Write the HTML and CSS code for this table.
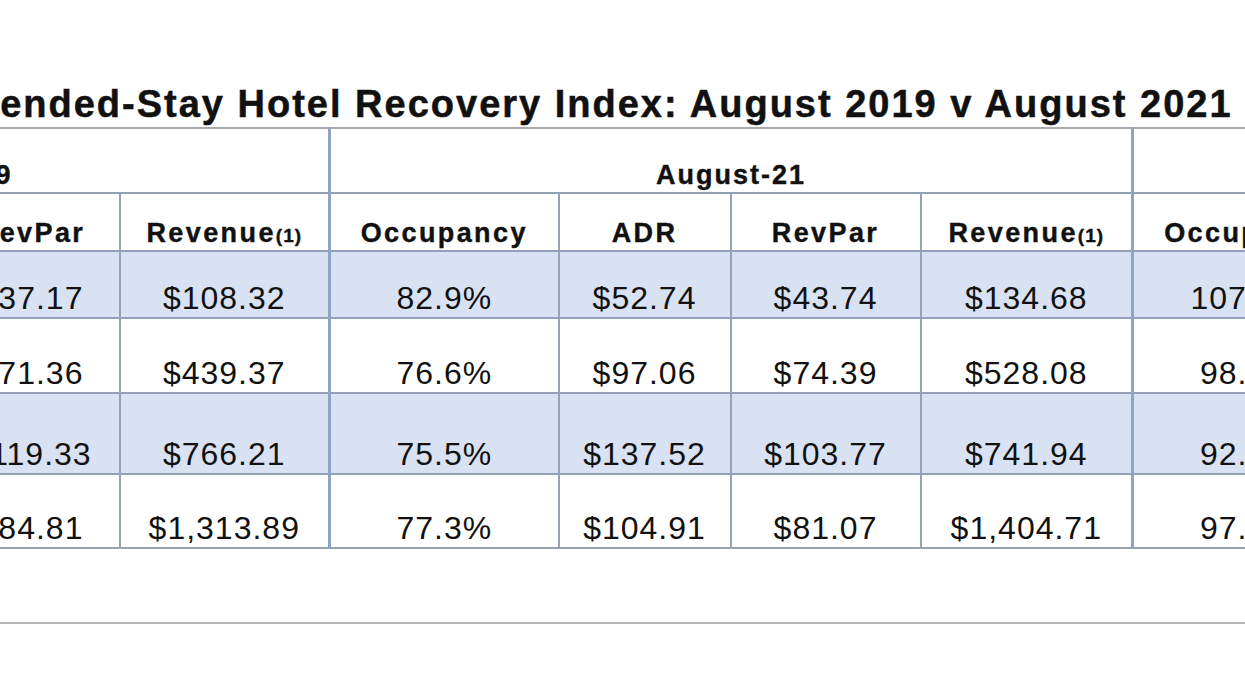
FILE: index.html
```html
<!DOCTYPE html>
<html lang="en">
<head>
<meta charset="utf-8">
<title>Extended-Stay Hotel Recovery Index</title>
<link rel="stylesheet" href="styles.css">
</head>
<body>
<div class="sheet">
  <h1 class="title">Extended-Stay Hotel Recovery Index: August 2019 v August 2021</h1>
  <table class="grid">
    <colgroup>
      <col class="w-occ19"><col class="w-adr19"><col class="w-rev19"><col class="w-tot19">
      <col class="w-occ21"><col class="w-adr21"><col class="w-rev21"><col class="w-tot21">
      <col class="w-idx">
    </colgroup>
    <thead>
      <tr class="row-grp">
        <th colspan="4" class="gs">August-19</th>
        <th colspan="4" class="gs">August-21</th>
        <th class="gs"></th>
      </tr>
      <tr class="row-hdr">
        <th class="gs">Occupancy</th><th>ADR</th><th>RevPar</th><th>Revenue<span class="fn">(1)</span></th>
        <th class="gs">Occupancy</th><th>ADR</th><th>RevPar</th><th>Revenue<span class="fn">(1)</span></th>
        <th class="gs">Occupancy</th>
      </tr>
    </thead>
    <tbody>
      <tr class="row-1 band">
        <td class="gs"></td><td></td><td>$37.17</td><td>$108.32</td>
        <td class="gs">82.9%</td><td>$52.74</td><td>$43.74</td><td>$134.68</td>
        <td class="gs">107.1%</td>
      </tr>
      <tr class="row-2">
        <td class="gs"></td><td></td><td>$71.36</td><td>$439.37</td>
        <td class="gs">76.6%</td><td>$97.06</td><td>$74.39</td><td>$528.08</td>
        <td class="gs">98.4%</td>
      </tr>
      <tr class="row-3 band">
        <td class="gs"></td><td></td><td>$119.33</td><td>$766.21</td>
        <td class="gs">75.5%</td><td>$137.52</td><td>$103.77</td><td>$741.94</td>
        <td class="gs">92.3%</td>
      </tr>
      <tr class="row-4 last">
        <td class="gs"></td><td></td><td>$84.81</td><td>$1,313.89</td>
        <td class="gs">77.3%</td><td>$104.91</td><td>$81.07</td><td>$1,404.71</td>
        <td class="gs">97.6%</td>
      </tr>
      <tr class="row-note">
        <td colspan="9" class="note"></td>
      </tr>
    </tbody>
  </table>
</div>
</body>
</html>
```

FILE: styles.css
```css
html, body {
  margin: 0;
  padding: 0;
  overflow: hidden;
  background: #ffffff;
}

body {
  width: 1245px;
  height: 700px;
  font-family: "Liberation Sans", Arial, sans-serif;
  color: #111111;
}

.sheet {
  margin-left: -456px;
  width: 1816px;
}

.title {
  margin: 0;
  height: 127px;
  box-sizing: border-box;
  padding: 85px 0 0 391px;
  font-size: 38px;
  line-height: 38px;
  font-weight: bold;
  letter-spacing: 2px;
  white-space: nowrap;
  -webkit-text-stroke: 0.5px #111111;
}

.grid {
  border-collapse: collapse;
  table-layout: fixed;
  width: 1816px;
  border-top: 2px solid #a7a9ad;
}

.w-occ19 { width: 226px; }
.w-adr19 { width: 172px; }
.w-rev19 { width: 176px; }
.w-tot19 { width: 210px; }
.w-occ21 { width: 229px; }
.w-adr21 { width: 172px; }
.w-rev21 { width: 190px; }
.w-tot21 { width: 212px; }
.w-idx   { width: 229px; }

.grid th,
.grid td {
  padding: 0 0 3px;
  text-align: center;
  vertical-align: bottom;
  white-space: nowrap;
  overflow: hidden;
  border-left: 2px solid #96a2b6;
  border-bottom: 2px solid #93a0b7;
}

.grid .gs {
  border-left: 3px solid #8ea3c6;
}

.row-grp th {
  height: 60px;
  font-size: 27px;
  line-height: 27px;
  letter-spacing: 2px;
  font-weight: bold;
  -webkit-text-stroke: 0.4px #111111;
}

.row-hdr th {
  height: 53px;
  font-size: 27px;
  line-height: 27px;
  letter-spacing: 2.4px;
  font-weight: bold;
  -webkit-text-stroke: 0.4px #111111;
}

.fn {
  font-size: 19px;
  line-height: 19px;
  letter-spacing: 1px;
}

tbody td {
  font-size: 32px;
  line-height: 32px;
  letter-spacing: 1px;
  padding-bottom: 2px;
}

.row-1 td { height: 62px; }
.row-2 td { height: 70px; }
.row-3 td { height: 76px; }
.row-4 td { height: 69px; }

.band td {
  background: #d9e2f3;
}

.last td {
  border-bottom: 2px solid #9aa1ad;
}

.grid .note {
  height: 70px;
  border-left: none;
  border-bottom: 2px solid #b3b5b9;
}
```
